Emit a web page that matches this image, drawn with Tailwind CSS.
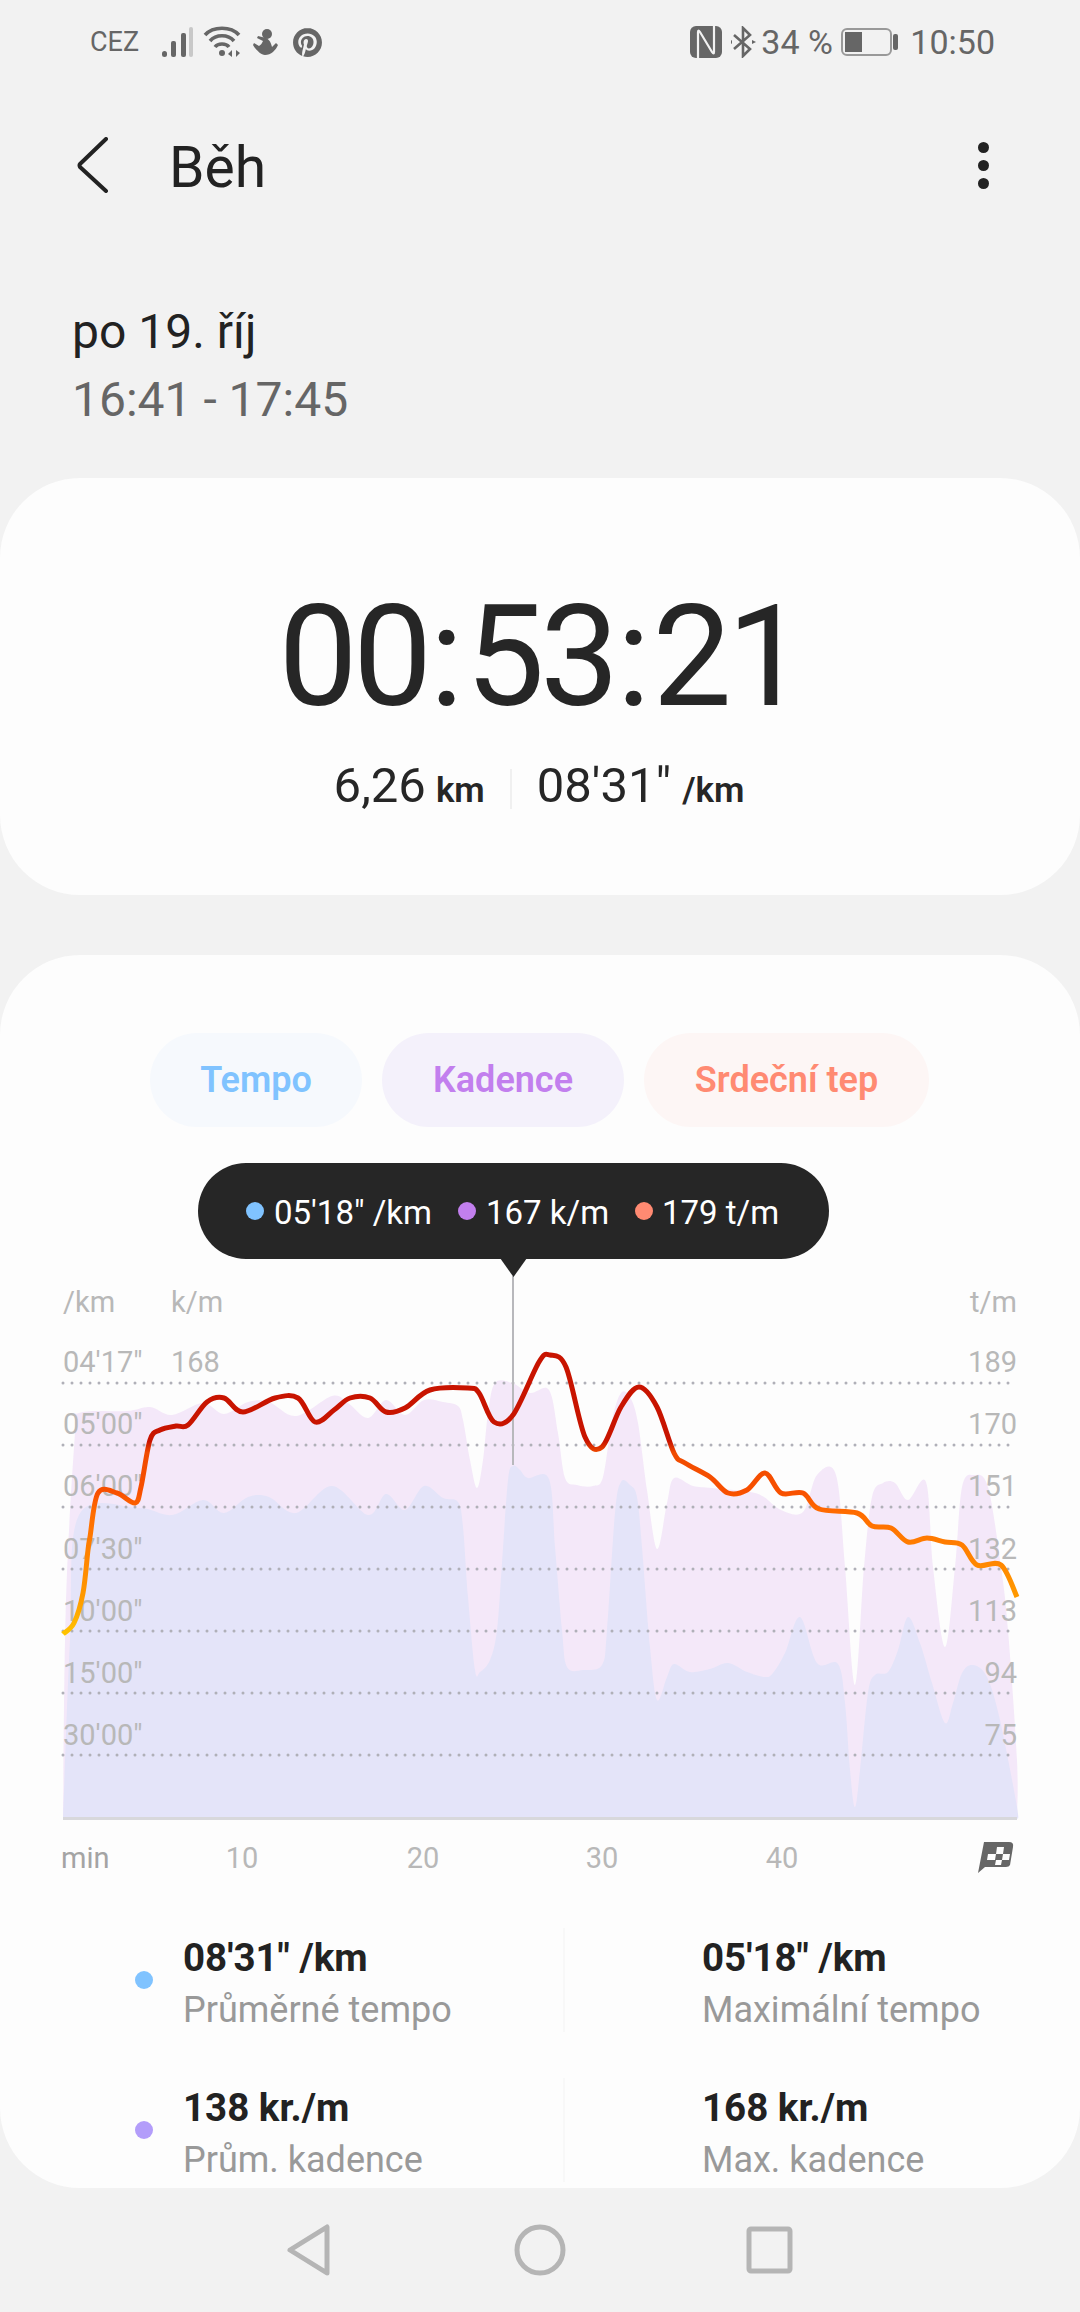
<!DOCTYPE html>
<html lang="en">
<head>
  <meta charset="UTF-8" />
  <meta name="viewport" content="width=device-width, initial-scale=1" />
  <title>Běh</title>
  <script src="https://cdn.jsdelivr.net/npm/@tailwindcss/browser@4"></script>
</head>
<body class="bg-[#f2f2f2] h-[2312px] w-[1080px] overflow-hidden font-['Roboto',sans-serif]">

  <!-- status bar -->
  <div class="h-[84px] flex items-center justify-between pl-[90px] pr-[85px] text-[#666]">
    <div class="flex items-center">
      <span class="text-[27px] w-[72px]">CEZ</span>
      <svg class="w-[31px] h-[30px]" viewBox="0 0 31 30"><rect x="0" y="24" width="5" height="6" rx="2.5" fill="#666"/><rect x="9" y="14" width="5" height="16" rx="2" fill="#666"/><rect x="19" y="6" width="5" height="24" rx="2" fill="#666"/><rect x="27" y="0" width="4" height="30" rx="2" fill="#c8c8c8"/></svg>
      <svg class="w-[38px] h-[32px] ml-[10px]" viewBox="0 0 38 32" fill="none" stroke="#666" stroke-width="3.6"><path d="M2 9 C10 0 28 0 36 9"/><path d="M7 15 C13 8 25 8 31 15"/><path d="M12 21 C15 17 23 17 26 21"/><circle cx="19" cy="27" r="3" fill="#666" stroke="none"/><path d="M29 31 V24 L25 28 Z M33 24 V31 L37 27 Z" fill="#666" stroke="none"/></svg>
      <svg class="w-[25px] h-[28px] ml-[12px]" viewBox="0 0 25 28" fill="#666"><circle cx="14" cy="6" r="5"/><path d="M13 10 L5 8 L4 10 L10 13 C9 15 8 17 6 18 L1 15 L0 17 C3 22 8 27 12 27 C18 27 23 22 25 17 L23 15 L19 19 C18 15 17 12 13 10 Z"/></svg>
      <svg class="w-[29px] h-[29px] ml-[15px]" viewBox="0 0 24 24" fill="#666"><path d="M12.017 0C5.396 0 .029 5.367.029 11.987c0 5.079 3.158 9.417 7.618 11.162-.105-.949-.199-2.403.041-3.439.219-.937 1.406-5.957 1.406-5.957s-.359-.72-.359-1.781c0-1.663.967-2.911 2.168-2.911 1.024 0 1.518.769 1.518 1.688 0 1.029-.653 2.567-.992 3.992-.285 1.193.6 2.165 1.775 2.165 2.128 0 3.768-2.245 3.768-5.487 0-2.861-2.063-4.869-5.008-4.869-3.41 0-5.409 2.562-5.409 5.199 0 1.033.394 2.143.889 2.741.099.12.112.225.085.345-.09.375-.293 1.199-.334 1.363-.053.225-.172.271-.401.165-1.495-.69-2.433-2.878-2.433-4.646 0-3.776 2.748-7.252 7.92-7.252 4.158 0 7.392 2.967 7.392 6.923 0 4.135-2.607 7.462-6.233 7.462-1.214 0-2.354-.629-2.758-1.379l-.749 2.848c-.269 1.045-1.004 2.352-1.498 3.146 1.123.345 2.306.535 3.55.535 6.607 0 11.985-5.365 11.985-11.987C23.97 5.39 18.592.026 11.985.026L12.017 0z"/></svg>
    </div>
    <div class="flex items-center">
      <svg class="w-[32px] h-[32px]" viewBox="0 0 32 32"><rect width="32" height="32" rx="6" fill="#666"/><path d="M8 32 V6 Q8 3 10 6 L22 26 Q24 29 24 26 V0" fill="none" stroke="#f2f2f2" stroke-width="2.2"/></svg>
      <svg class="w-[25px] h-[32px] ml-[9px]" viewBox="0 0 25 32" fill="none" stroke="#666" stroke-width="2.6"><path d="M3 9 L19 23 L12 30 V2 L19 9 L3 23"/><path d="M21 14 L25 16 L21 18 Z M1 14 L1 18 L-2 16 Z" fill="#666" stroke="none"/></svg>
      <span class="text-[34px] ml-[5px] w-[80px]">34 %</span>
      <svg class="w-[58px] h-[28px]" viewBox="0 0 58 28"><rect x="1" y="1" width="49" height="26" rx="5" fill="none" stroke="#999" stroke-width="2"/><rect x="4" y="4" width="17" height="20" fill="#666"/><rect x="52" y="6" width="5" height="16" rx="2" fill="#666"/></svg>
      <span class="text-[34px] ml-[11px]">10:50</span>
    </div>
  </div>

  <!-- header -->
  <div class="mt-[27px] h-[108px] flex items-center justify-between pl-[77px] pr-[91px]">
    <div class="flex items-center">
      <svg class="w-[32px] h-[56px]" viewBox="0 0 32 56" fill="none" stroke="#222" stroke-width="4" stroke-linecap="round" stroke-linejoin="round"><path d="M29 2 L3 27 Q2 28 3 30 L29 54"/></svg>
      <h1 class="ml-[60px] pt-[4px] text-[57px] leading-none text-[#222]">Běh</h1>
    </div>
    <div class="flex flex-col gap-[7px]">
      <span class="block w-[11px] h-[11px] rounded-full bg-[#222]"></span>
      <span class="block w-[11px] h-[11px] rounded-full bg-[#222]"></span>
      <span class="block w-[11px] h-[11px] rounded-full bg-[#222]"></span>
    </div>
  </div>

  <!-- date -->
  <div class="mt-[79px] pl-[72px] mb-[44px]">
    <p class="text-[48px] leading-[68px] text-[#222]">po 19. říj</p>
    <p class="text-[48px] leading-[68px] text-[#666]">16:41 - 17:45</p>
  </div>

  <!-- summary card -->
  <section class="h-[417px] bg-[#fdfdfd] rounded-[80px] pt-[129px]">
    <p class="flex justify-center text-[141px] leading-[100px] text-[#262626]">
      <span class="w-[74.5px] text-center">0</span><span class="w-[74.5px] text-center">0</span><span class="w-[38px] text-center">:</span><span class="w-[74.5px] text-center">5</span><span class="w-[74.5px] text-center">3</span><span class="w-[38px] text-center">:</span><span class="w-[74.5px] text-center">2</span><span class="w-[74.5px] text-center">1</span>
    </p>
    <div class="mt-[49px] pr-[2px] flex justify-center items-baseline text-[#262626] leading-[60px]">
      <span class="text-[49px]">6,26</span>
      <span class="text-[35px] font-semibold ml-[10px]">km</span>
      <span class="w-[2px] h-[40px] bg-[#f0f0f0] mx-[25px] self-center"></span>
      <span class="text-[49px]">08'31"</span>
      <span class="text-[35px] font-semibold ml-[11px]">/km</span>
    </div>
  </section>

  <!-- chart card -->
  <section class="mt-[60px] h-[1233px] bg-[#fdfdfd] rounded-[80px] overflow-hidden pt-[78px]">
    <div class="flex pl-[150px] gap-[20px] text-[36px] font-semibold leading-[94px] text-center">
      <span class="w-[212px] h-[94px] rounded-full bg-[#f6f9fd] text-[#80c3ff]">Tempo</span>
      <span class="w-[242px] h-[94px] rounded-full bg-[#f4f1fb] text-[#c27fee]">Kadence</span>
      <span class="w-[285px] h-[94px] rounded-full bg-[#fdf6f5] text-[#ff8a72]">Srdeční tep</span>
    </div>

    <div class="relative mt-[3px] h-[750px]">
      <div class="absolute left-[198px] top-[33px] w-[631px] h-[96px] rounded-full bg-[#262626] text-white text-[33px] flex items-center pl-[48px]">
        <span class="w-[18px] h-[18px] rounded-full bg-[#80c3ff]"></span>
        <span class="ml-[10px] w-[184px] pt-[3px]">05'18" /km</span>
        <span class="w-[18px] h-[18px] rounded-full bg-[#c27fee]"></span>
        <span class="ml-[10px] w-[149px] pt-[3px]">167 k/m</span>
        <span class="w-[18px] h-[18px] rounded-full bg-[#ff8a72]"></span>
        <span class="ml-[9px] pt-[3px]">179 t/m</span>
      </div>

      <!-- viewBox keeps the screen's y so the points read straight from the reference -->
      <svg class="block w-[1080px] h-[750px]" viewBox="0 1130 1080 750">
        <defs>
          <linearGradient id="hr" gradientUnits="userSpaceOnUse" x1="0" y1="1350" x2="0" y2="1635">
            <stop offset="0" stop-color="#c81400"/>
            <stop offset="0.32" stop-color="#c81400"/>
            <stop offset="0.36" stop-color="#f04b00"/>
            <stop offset="0.5" stop-color="#f85000"/>
            <stop offset="0.57" stop-color="#ff6c00"/>
            <stop offset="0.87" stop-color="#ff9a00"/>
            <stop offset="1" stop-color="#ffc400"/>
          </linearGradient>
        </defs>
        <path id="areaPink" fill="#f4e8f9"/>
        <path id="areaBlue" fill="#e4e4f9"/>
        <rect x="63" y="1817" width="954" height="3" fill="#d8d8dc"/>

        <g class="text-[29px] fill-[#b8b8b8]">
          <text x="63" y="1312">/km</text>
          <text x="171" y="1312">k/m</text>
          <text x="1017" y="1312" text-anchor="end">t/m</text>
          <text x="63" y="1372">04'17"</text>
          <text x="171" y="1372">168</text>
          <text x="63" y="1434">05'00"</text>
          <text x="63" y="1496">06'00"</text>
          <text x="63" y="1559">07'30"</text>
          <text x="63" y="1621">10'00"</text>
          <text x="63" y="1683">15'00"</text>
          <text x="63" y="1745">30'00"</text>
          <text x="1017" y="1372" text-anchor="end">189</text>
          <text x="1017" y="1434" text-anchor="end">170</text>
          <text x="1017" y="1496" text-anchor="end">151</text>
          <text x="1017" y="1559" text-anchor="end">132</text>
          <text x="1017" y="1621" text-anchor="end">113</text>
          <text x="1017" y="1683" text-anchor="end">94</text>
          <text x="1017" y="1745" text-anchor="end">75</text>
          <text x="61" y="1868" class="fill-[#a4a4a4]">min</text>
          <text x="242" y="1868" text-anchor="middle">10</text>
          <text x="423" y="1868" text-anchor="middle">20</text>
          <text x="602" y="1868" text-anchor="middle">30</text>
          <text x="782" y="1868" text-anchor="middle">40</text>
        </g>

        <g stroke="#b0b0b8" stroke-width="3" stroke-linecap="round" stroke-dasharray="0 9">
          <path d="M63 1383 H1017"/><path d="M63 1445 H1017"/><path d="M63 1507 H1017"/><path d="M63 1569 H1017"/><path d="M63 1631 H1017"/><path d="M63 1693 H1017"/><path d="M63 1755 H1017"/>
        </g>

        <path d="M513 1276 V1465" stroke="#b8b8bc" stroke-width="2"/>
        <path d="M500 1258 H527 L513.5 1277 Z" fill="#262626"/>
        <path id="lineHr" fill="none" stroke="url(#hr)" stroke-width="5" stroke-linejoin="round"/>

        <!-- finish flag -->
        <path d="M984 1842 H1009 Q1014 1842 1013 1847 L1010 1865 Q1009 1867 1006 1867 H985 L978 1873 Z" fill="#666"/>
        <path d="M997 1847 H1004 L1003 1854 H996 Z M988 1854 H996 L995 1860 H987 Z M1003 1854 H1010 L1009 1860 H1002 Z M996 1860 H1002 L1001 1865 H995 Z" fill="#fdfdfd"/>
      </svg>
    </div>

    <!-- stats -->
    <div class="mt-[48px] flex flex-col gap-[46px]">
      <div class="flex h-[104px]">
        <div class="w-[563px] flex pl-[135px] items-center">
          <span class="w-[18px] h-[18px] rounded-full bg-[#80c3ff]"></span>
          <div class="ml-[30px] self-start pt-[5px]">
            <p class="text-[38.5px] font-bold leading-[50px] text-[#222]">08'31" /km</p>
            <p class="text-[36px] leading-[54px] text-[#999]">Průměrné tempo</p>
          </div>
        </div>
        <div class="border-l-2 border-[#f8f8f8] pl-[137px]">
          <div class="pt-[5px]">
            <p class="text-[38.5px] font-bold leading-[50px] text-[#222]">05'18" /km</p>
            <p class="text-[36px] leading-[54px] text-[#999]">Maximální tempo</p>
          </div>
        </div>
      </div>
      <div class="flex h-[104px]">
        <div class="w-[563px] flex pl-[135px] items-center">
          <span class="w-[18px] h-[18px] rounded-full bg-[#b39dfa]"></span>
          <div class="ml-[30px] self-start pt-[5px]">
            <p class="text-[38.5px] font-bold leading-[50px] text-[#222]">138 kr./m</p>
            <p class="text-[36px] leading-[54px] text-[#999]">Prům. kadence</p>
          </div>
        </div>
        <div class="border-l-2 border-[#f8f8f8] pl-[137px]">
          <div class="pt-[5px]">
            <p class="text-[38.5px] font-bold leading-[50px] text-[#222]">168 kr./m</p>
            <p class="text-[36px] leading-[54px] text-[#999]">Max. kadence</p>
          </div>
        </div>
      </div>
    </div>
  </section>

  <!-- nav bar -->
  <div class="h-[124px] flex items-center justify-center">
    <svg class="w-[620px] h-[60px]" viewBox="230 2220 620 60" fill="none" stroke="#b5b5b5" stroke-width="5" stroke-linejoin="round">
      <path d="M327 2227 V2273 L290 2250 Z"/>
      <circle cx="540" cy="2250" r="23"/>
      <rect x="749" y="2229" width="41" height="42" rx="2"/>
    </svg>
  </div>

  <script>
    // x,y pairs read off the reference, in page pixels
    const hr = [[63,1634],[74,1623],[83,1593],[88,1550],[90,1537],[98,1493],[117,1493],[135,1503],[141,1487],[150,1440],[160,1430],[176,1426],[188,1425],[207,1402],[224,1398],[243,1412],[275,1398],[298,1398],[315,1422],[334,1410],[350,1398],[370,1398],[386,1412],[405,1408],[430,1390],[468,1388],[479,1393],[494,1422],[513,1415],[539,1362],[550,1355],[566,1367],[585,1437],[602,1447],[621,1407],[639,1387],[657,1407],[674,1453],[685,1463],[710,1477],[728,1493],[747,1490],[765,1473],[781,1493],[803,1493],[819,1509],[857,1513],[872,1526],[891,1528],[908,1542],[927,1538],[945,1542],[962,1545],[977,1565],[1001,1565],[1017,1597]];
    const pink = [[63,1819],[66,1600],[75,1433],[79,1413],[127,1411],[150,1407],[172,1415],[203,1403],[224,1414],[248,1402],[269,1402],[296,1416],[332,1396],[348,1403],[368,1418],[386,1400],[405,1415],[424,1400],[443,1402],[458,1406],[463,1420],[470,1460],[477,1488],[483,1460],[488,1413],[495,1383],[512,1383],[530,1393],[549,1390],[558,1433],[565,1478],[577,1485],[593,1486],[603,1477],[612,1420],[621,1393],[630,1397],[638,1423],[647,1490],[657,1549],[667,1503],[674,1478],[693,1486],[712,1488],[750,1492],[764,1497],[781,1510],[803,1512],[817,1475],[836,1475],[845,1567],[855,1685],[864,1567],[872,1497],[883,1483],[895,1483],[908,1500],[926,1482],[933,1567],[945,1647],[955,1567],[962,1487],[974,1475],[988,1487],[1001,1567],[1008,1630],[1017,1760],[1017,1819]];
    const blue = [[63,1819],[70,1640],[79,1515],[138,1508],[172,1515],[203,1500],[224,1513],[248,1497],[269,1497],[296,1513],[332,1486],[368,1515],[386,1494],[405,1510],[424,1486],[443,1498],[458,1502],[463,1527],[468,1597],[475,1670],[480,1672],[490,1660],[497,1630],[502,1563],[508,1480],[513,1466],[520,1470],[528,1478],[549,1479],[555,1547],[562,1630],[567,1667],[583,1670],[602,1665],[607,1630],[615,1513],[621,1482],[630,1485],[637,1497],[642,1547],[650,1647],[657,1700],[667,1677],[674,1664],[690,1672],[710,1669],[728,1663],[747,1672],[765,1677],[773,1673],[785,1653],[800,1617],[817,1663],[838,1664],[845,1703],[850,1770],[855,1807],[860,1770],[868,1693],[875,1675],[888,1672],[898,1650],[908,1617],[920,1643],[932,1683],[945,1723],[953,1703],[962,1673],[973,1665],[987,1677],[1000,1720],[1017,1807],[1017,1819]];

    function smooth(pts) {
      let d = 'M' + pts[0].join(' ');
      for (let i = 0; i < pts.length - 1; i++) {
        const p0 = pts[i - 1] || pts[i], p1 = pts[i], p2 = pts[i + 1], p3 = pts[i + 2] || p2;
        const c1 = [p1[0] + (p2[0] - p0[0]) / 6, p1[1] + (p2[1] - p0[1]) / 6];
        const c2 = [p2[0] - (p3[0] - p1[0]) / 6, p2[1] - (p3[1] - p1[1]) / 6];
        d += ' C' + c1.join(' ') + ' ' + c2.join(' ') + ' ' + p2.join(' ');
      }
      return d;
    }

    document.getElementById('lineHr').setAttribute('d', smooth(hr));
    document.getElementById('areaPink').setAttribute('d', smooth(pink) + ' Z');
    document.getElementById('areaBlue').setAttribute('d', smooth(blue) + ' Z');
  </script>
</body>
</html>
